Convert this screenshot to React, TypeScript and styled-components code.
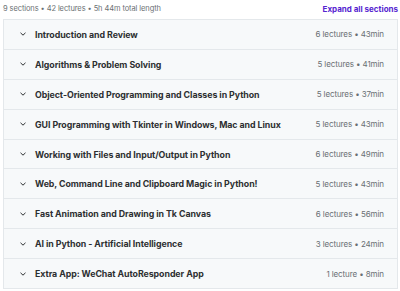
import styled, { createGlobalStyle } from "styled-components";

const GlobalStyle = createGlobalStyle`
  html, body {
    margin: 0;
    padding: 0;
    background: #ffffff;
  }
  body {
    font-family: "Inter", "Liberation Sans", sans-serif;
    color: #2d2f31;
  }
`;

const sections = [
  { title: "Introduction and Review", meta: "6 lectures • 43min" },
  { title: "Algorithms & Problem Solving", meta: "5 lectures • 41min" },
  { title: "Object-Oriented Programming and Classes in Python", meta: "5 lectures • 37min" },
  { title: "GUI Programming with Tkinter in Windows, Mac and Linux", meta: "5 lectures • 43min" },
  { title: "Working with Files and Input/Output in Python", meta: "6 lectures • 49min" },
  { title: "Web, Command Line and Clipboard Magic in Python!", meta: "5 lectures • 43min" },
  { title: "Fast Animation and Drawing in Tk Canvas", meta: "6 lectures • 56min" },
  { title: "AI in Python - Artificial Intelligence", meta: "3 lectures • 24min" },
  { title: "Extra App: WeChat AutoResponder App", meta: "1 lecture • 8min" },
];

export default function App() {
  return (
    <>
      <GlobalStyle />
      <Page>
        <TopBar>
          <Summary>9 sections • 42 lectures • 5h 44m total length</Summary>
          <ExpandButton>Expand all sections</ExpandButton>
        </TopBar>
        <Accordion>
          {sections.map((s) => (
            <Row key={s.title}>
              <Chevron viewBox="0 0 10 10">
                <path d="M2.5 3.8 L5 6.2 L7.5 3.8" />
              </Chevron>
              <Title>{s.title}</Title>
              <Meta>{s.meta}</Meta>
            </Row>
          ))}
        </Accordion>
      </Page>
    </>
  );
}

const Page = styled.div`
  width: 400px;
  padding: 0 2px 0 3px;
  box-sizing: border-box;
`;

const TopBar = styled.div`
  display: flex;
  align-items: center;
  justify-content: space-between;
  height: 17px;
  padding-bottom: 2px;
`;

const Summary = styled.span`
  font-size: 7.5px;
  color: #6a6f73;
  letter-spacing: -0.1px;
`;

const ExpandButton = styled.button`
  border: none;
  background: none;
  padding: 0;
  font-family: inherit;
  font-size: 8px;
  font-weight: 700;
  color: #5624d0;
  cursor: pointer;
`;

const Accordion = styled.div`
  border: 1px solid #e4e8eb;
  display: flex;
  flex-direction: column;
`;

const Row = styled.div`
  display: flex;
  align-items: center;
  height: 28.9px;
  padding: 0 13px 0 14px;
  background: #f7f9fa;
  & + & {
    border-top: 1px solid #e4e8eb;
  }
`;

const Chevron = styled.svg`
  width: 10px;
  height: 10px;
  flex-shrink: 0;
  margin-right: 7px;
  fill: none;
  stroke: #2d2f31;
  stroke-width: 1;
`;

const Title = styled.span`
  flex: 1;
  font-size: 8.8px;
  font-weight: 700;
  color: #2d2f31;
  letter-spacing: -0.05px;
`;

const Meta = styled.span`
  font-size: 8px;
  color: #6a6f73;
  letter-spacing: -0.1px;
`;
